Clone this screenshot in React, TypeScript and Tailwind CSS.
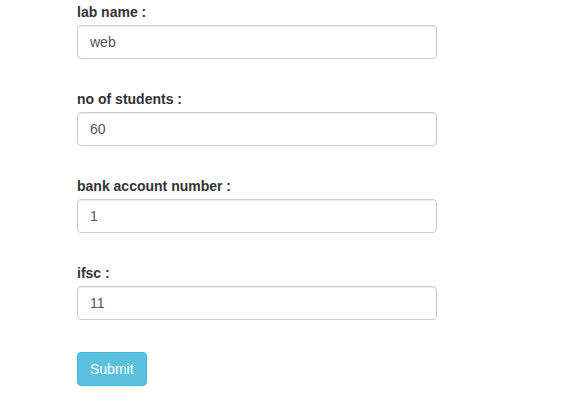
const fields = [
  { label: 'lab name :', value: 'web' },
  { label: 'no of students :', value: '60' },
  { label: 'bank account number :', value: '1' },
  { label: 'ifsc :', value: '11' },
];

export default function App() {
  return (
    <div className="min-h-[404px] bg-white pl-[77px] text-[14px] leading-[20px] text-[#333] font-['Liberation_Sans',Arial,sans-serif]">
      <form className="w-[360px]" onSubmit={(e) => e.preventDefault()}>
        {fields.map((f) => (
          <div key={f.label} className="mb-[28px]">
            <label className="mb-[3px] inline-block pt-[2px] font-bold">{f.label}</label>
            <input
              type="text"
              defaultValue={f.value}
              className="block h-[34px] w-full rounded-[4px] border border-[#ccc] bg-white px-[12px] py-[6px] text-[14px] text-[#555] shadow-[inset_0_1px_1px_rgba(0,0,0,0.075)] outline-none"
            />
          </div>
        ))}
        <button
          type="submit"
          className="mt-[4px] h-[34px] rounded-[4px] border border-[#46b8da] bg-[#5bc0de] px-[12px] py-[6px] text-[14px] text-white"
        >
          Submit
        </button>
      </form>
    </div>
  );
}
